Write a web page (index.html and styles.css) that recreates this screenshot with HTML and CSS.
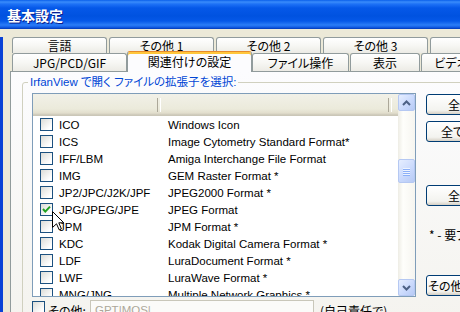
FILE: index.html
```html
<!DOCTYPE html>
<html lang="ja">
<head>
    <meta charset="UTF-8">
    <title>基本設定</title>
    <link rel="stylesheet" href="styles.css">
</head>
<body>
    <div class="window">
        <div class="titlebar">基本設定</div>
        <div class="client">
            <!-- Tabs -->
            <div class="tabs">
                <div class="tab-row back">
                    <div class="tab w-lang">言語</div>
                    <div class="tab w-other">その他 1</div>
                    <div class="tab w-other">その他 2</div>
                    <div class="tab w-other">その他 3</div>
                    <div class="tab w-other"></div>
                </div>
                <div class="tab-row front">
                    <div class="tab w-jpg">JPG/PCD/GIF</div>
                    <div class="tab active w-assoc">関連付けの設定</div>
                    <div class="tab w-file">ファイル操作</div>
                    <div class="tab w-view">表示</div>
                    <div class="tab w-video">ビデオ</div>
                </div>
            </div>

            <!-- Tab page -->
            <div class="panel">
                <fieldset class="group">
                    <legend>IrfanView で開く ファイルの拡張子を選択:</legend>
                    <div class="group-body">
                        <div class="list">
                            <div class="list-main">
                                <div class="list-head">
                                    <span class="col col-ext"></span>
                                    <span class="col col-desc"></span>
                                </div>
                                <div class="row"><span class="cb"></span><span class="ext">ICO</span><span class="desc">Windows Icon</span></div>
                                <div class="row"><span class="cb"></span><span class="ext">ICS</span><span class="desc">Image Cytometry Standard Format*</span></div>
                                <div class="row"><span class="cb"></span><span class="ext">IFF/LBM</span><span class="desc">Amiga Interchange File Format</span></div>
                                <div class="row"><span class="cb"></span><span class="ext">IMG</span><span class="desc">GEM Raster Format *</span></div>
                                <div class="row"><span class="cb"></span><span class="ext">JP2/JPC/J2K/JPF</span><span class="desc">JPEG2000 Format *</span></div>
                                <div class="row"><span class="cb checked"><svg width="11" height="11" viewBox="0 0 11 11"><path d="M2 5 L4.3 7.6 L9 2.6" fill="none" stroke="#21A121" stroke-width="2"/></svg></span><span class="ext">JPG/JPEG/JPE</span><span class="desc">JPEG Format</span></div>
                                <div class="row"><span class="cb"></span><span class="ext">JPM</span><span class="desc">JPM Format *</span></div>
                                <div class="row"><span class="cb"></span><span class="ext">KDC</span><span class="desc">Kodak Digital Camera Format *</span></div>
                                <div class="row"><span class="cb"></span><span class="ext">LDF</span><span class="desc">LuraDocument Format *</span></div>
                                <div class="row"><span class="cb"></span><span class="ext">LWF</span><span class="desc">LuraWave Format *</span></div>
                                <div class="row"><span class="cb"></span><span class="ext">MNG/JNG</span><span class="desc">Multiple Network Graphics *</span></div>
                            </div>
                            <div class="scrollbar">
                                <div class="sb-btn">
                                    <svg width="9" height="6" viewBox="0 0 9 6"><path d="M1 5 L4.5 1.5 L8 5" fill="none" stroke="#4D6185" stroke-width="2"/></svg>
                                </div>
                                <div class="sb-thumb">
                                    <span></span><span></span><span></span><span></span>
                                </div>
                                <div class="sb-btn down">
                                    <svg width="9" height="6" viewBox="0 0 9 6"><path d="M1 1 L4.5 4.5 L8 1" fill="none" stroke="#4D6185" stroke-width="2"/></svg>
                                </div>
                            </div>
                        </div>

                        <div class="side">
                            <button class="btn btn-1">全て選択</button>
                            <button class="btn btn-2">全て解除</button>
                            <button class="btn btn-3">全て画像</button>
                            <div class="note">* - 要プラグイン</div>
                            <button class="btn btn-4">その他...</button>
                        </div>
                    </div>

                    <div class="other-row">
                        <span class="cb"></span>
                        <span class="other-label">その他:</span>
                        <span class="other-input">GPT|MOS|</span>
                        <span class="other-note">(自己責任で)</span>
                    </div>
                </fieldset>
            </div>
        </div>

        <svg class="cursor" width="13" height="20" viewBox="0 0 13 20">
            <path d="M0.5 0.5 L0.5 16.5 L4.5 12.8 L7.2 18.8 L9.4 17.8 L6.8 11.8 L11.8 11.8 Z" fill="#fff" stroke="#000" stroke-width="1"/>
        </svg>
    </div>
</body>
</html>
```

FILE: styles.css
```css
* {
    box-sizing: border-box;
}

body {
    margin: 0;
    width: 460px;
    height: 312px;
    overflow: hidden;
    background: #ECE9D8;
    font-family: "Noto Sans CJK JP", "Liberation Sans", sans-serif;
    font-size: 12px;
    font-feature-settings: "palt";
    color: #000;
}

.window {
    position: relative;
    height: 312px;
}

.titlebar {
    height: 29px;
    padding-left: 7px;
    display: flex;
    align-items: center;
    color: #fff;
    font-size: 14px;
    font-weight: bold;
    text-shadow: 1px 1px #0A1E8C;
    background: linear-gradient(#0A5FEA 0, #3A8CFB 2px, #1E72F6 4px, #0558E8 8px, #0052E0 16px, #0558E8 21px, #2B7DF7 25px, #1560E8 27px, #0038B8 29px);
}

.client {
    height: 283px;
    border-left: 3px solid #0A42D6;
}

/* tabs */
.tabs {
    margin: 8px 0 0 9px;
}

.tab-row {
    display: flex;
    height: 16px;
}

.tab-row.front {
    height: 18px;
}

.tab {
    flex: none;
    height: 100%;
    border: 1px solid #919B9C;
    border-bottom: 0;
    border-radius: 3px 3px 0 0;
    background: linear-gradient(#FFFFFF, #F7F7F4 50%, #ECEBE5);
    text-align: center;
    line-height: 15px;
    white-space: nowrap;
    overflow: hidden;
}

.front .tab {
    line-height: 17px;
}

.tab-row .w-lang { width: 95px; }
.tab-row .w-other { width: 105px; margin-left: 2px; }
.tab-row .w-jpg { width: 115px; }
.tab-row .w-file { width: 97px; }
.tab-row .w-view { width: 70px; margin-left: 1px; }
.tab-row .w-video { width: 60px; margin-left: 1px; }

.front .tab.active {
    position: relative;
    z-index: 1;
    width: 125px;
    height: 21px;
    margin-top: -2px;
    line-height: 20px;
    border-top: 1px solid #E68B2C;
    background: #FCFCFE;
    box-shadow: inset 0 2px #FFC73C;
}

/* tab page */
.panel {
    margin-left: 7px;
    width: 530px;
    height: 260px;
    padding: 2px 0 0 11px;
    border: 1px solid #919B9C;
    background: linear-gradient(#FCFCFE, #F4F3EE);
}

.group {
    margin: 0;
    width: 500px;
    height: 250px;
    padding: 0 0 0 5px;
    border: 1px solid #D0D0BF;
    border-radius: 3px;
}

.group legend {
    padding: 0 2px;
    line-height: 16px;
    color: #0046D5;
    font-family: "Liberation Sans", "Noto Sans CJK JP", sans-serif;
    font-size: 11.5px;
}

.group-body {
    display: flex;
    align-items: flex-start;
}

/* list view */
.list {
    display: flex;
    flex: none;
    width: 384px;
    height: 204px;
    margin: 3px 0 0 4px;
    border: 1px solid #7F9DB9;
    background: #fff;
    font-family: "Liberation Sans", "Noto Sans CJK JP", sans-serif;
    font-size: 11.5px;
}

.list-main {
    flex: 1;
    overflow: hidden;
}

.list-head {
    display: flex;
    height: 22px;
    background: linear-gradient(#F2F1E8 0, #EBEADB 15px, #E2DECD 19px, #D6D2C2 20px, #CBC7B8 21px);
}

.col {
    height: 100%;
    position: relative;
}

.col-ext { width: 128px; }
.col-desc { width: 231px; }

.col::after {
    content: "";
    position: absolute;
    right: 0;
    top: 4px;
    width: 2px;
    height: 14px;
    border-left: 1px solid #ACA899;
    border-right: 1px solid #fff;
}

.row {
    display: flex;
    align-items: center;
    height: 17px;
    white-space: nowrap;
}

.cb {
    flex: none;
    width: 13px;
    height: 13px;
    border: 1px solid #1C5180;
    background: linear-gradient(135deg, #DCDCD7, #FFFFFF 80%);
    display: flex;
    align-items: center;
    justify-content: center;
}

.row .cb {
    margin-left: 7px;
}

.ext {
    width: 109px;
    margin-left: 6px;
}

.scrollbar {
    flex: none;
    width: 17px;
    display: flex;
    flex-direction: column;
    background: linear-gradient(90deg, #EEEDE5, #FEFEFB 30%, #F6F5F0);
}

.sb-btn,
.sb-thumb {
    width: 17px;
    height: 17px;
    border: 1px solid #B5C8F2;
    border-radius: 2px;
    background: linear-gradient(135deg, #E6EEFF, #C8D8FC 60%, #B7CAF5);
    display: flex;
    align-items: center;
    justify-content: center;
}

.sb-thumb {
    height: 24px;
    margin-top: 48px;
    flex-direction: column;
    gap: 1px;
}

.sb-thumb span {
    width: 7px;
    height: 1px;
    background: #EEF4FE;
    box-shadow: 0 1px #8CB0F8;
}

.sb-btn.down {
    margin-top: auto;
}

/* buttons at right */
.side {
    display: flex;
    flex-direction: column;
    margin-left: 10px;
}

.btn {
    width: 80px;
    height: 21px;
    padding: 0;
    border: 1px solid #003C74;
    border-radius: 3px;
    background: linear-gradient(#FFFFFF, #F3F3EF 80%, #D6D0C5);
    font: inherit;
    text-align: left;
    white-space: nowrap;
    overflow: hidden;
}

.btn-1 { margin-top: 4px; padding-left: 21px; }
.btn-2 { margin-top: 6px; padding-left: 14px; }
.btn-3 { margin-top: 43px; padding-left: 21px; }
.btn-4 { margin-top: 32px; padding-left: 1px; }

.note {
    margin: 21px 0 0 3px;
    line-height: 16px;
    white-space: nowrap;
}

/* other extensions */
.other-row {
    display: flex;
    align-items: center;
    height: 20px;
    margin: 3px 0 0 4px;
    white-space: nowrap;
}

.other-row .cb {
    align-self: flex-start;
    margin-top: 1px;
}

.other-label {
    width: 42px;
    margin-left: 3px;
}

.other-input {
    width: 224px;
    height: 20px;
    padding-left: 4px;
    line-height: 18px;
    border: 1px solid #C9C7BA;
    background: #FBFBF9;
    color: #ACA899;
    font-family: "Liberation Sans", sans-serif;
    font-size: 11.5px;
}

.other-note {
    margin-left: 6px;
}

.cursor {
    position: absolute;
    left: 52px;
    top: 211px;
}
```
